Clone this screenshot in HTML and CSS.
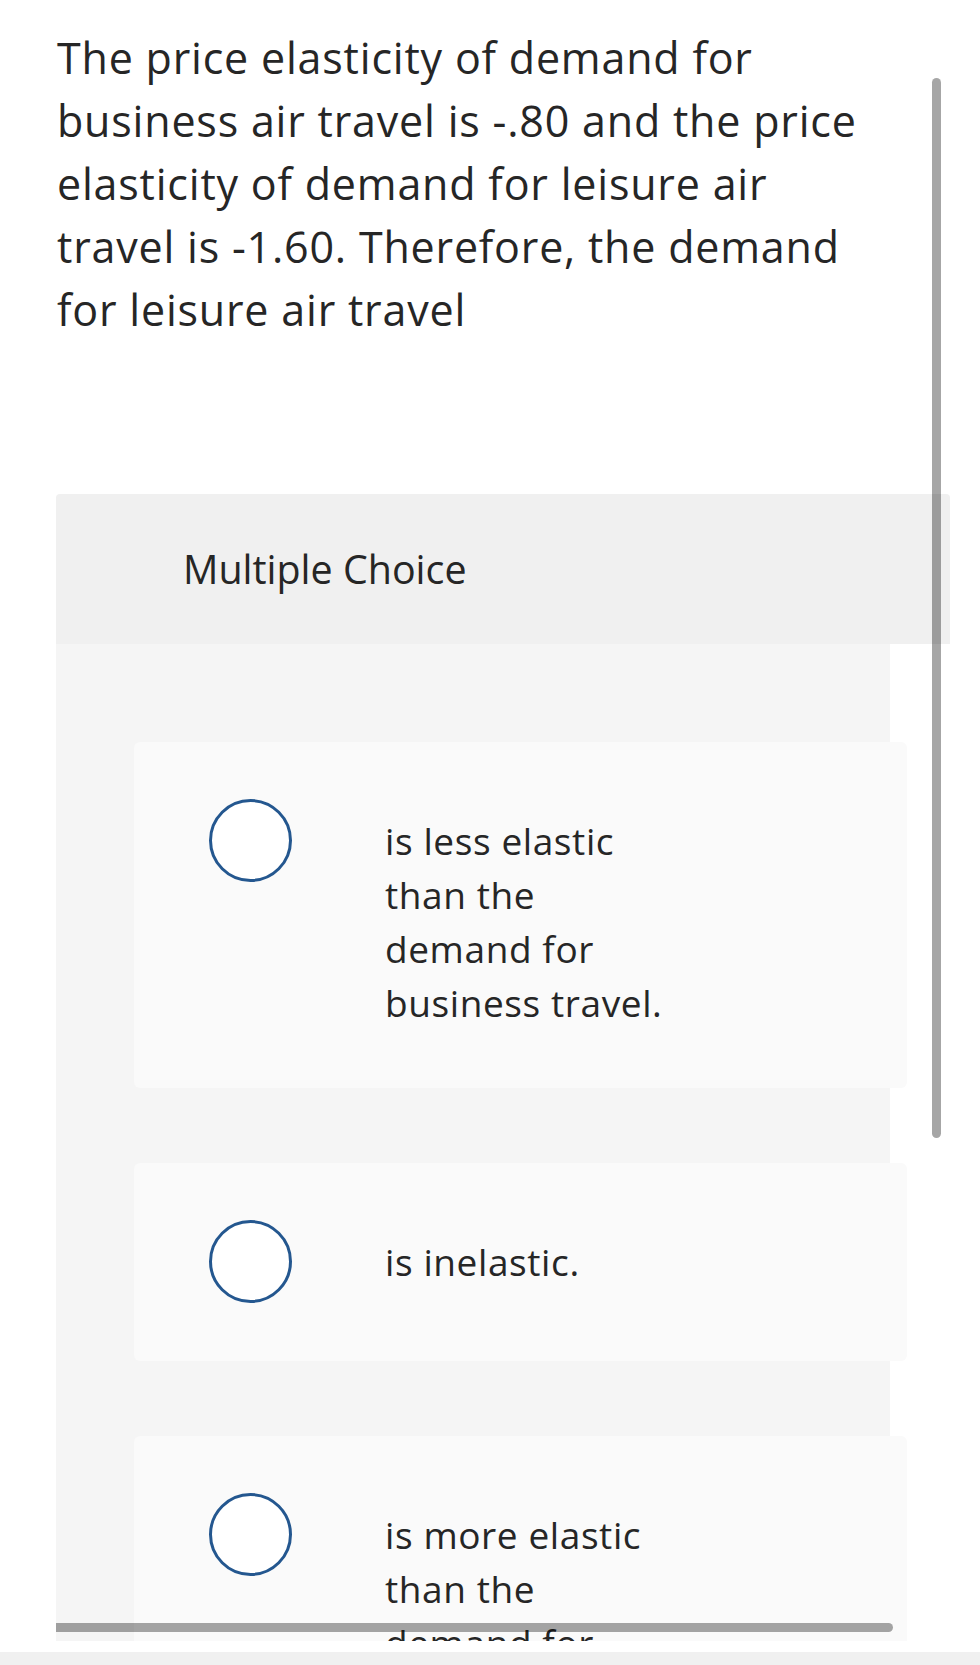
FILE: index.html
```html
<!DOCTYPE html>
<html lang="en">
<head>
<meta charset="utf-8">
<title>Multiple Choice</title>
<link rel="stylesheet" href="styles.css">
</head>
<body>
<div class="page">
  <p class="question">The price elasticity of demand for business air travel is -.80 and the price elasticity of demand for leisure air travel is -1.60. Therefore, the demand for leisure air travel</p>

  <section class="quiz">
    <div class="quiz-head">Multiple Choice</div>
    <div class="choices">
      <div class="choice">
        <span class="radio"></span>
        <span class="label">is less elastic than the demand for business travel.</span>
      </div>
      <div class="choice">
        <span class="radio"></span>
        <span class="label">is inelastic.</span>
      </div>
      <div class="choice">
        <span class="radio"></span>
        <span class="label">is more elastic than the demand for business travel.</span>
      </div>
    </div>
    <div class="hscroll"></div>
  </section>

  <div class="footer-bar"></div>
  <div class="vscroll"></div>
</div>
</body>
</html>
```
FILE: styles.css
```css
html, body {
  margin: 0;
  padding: 0;
  background: #ffffff;
}

body {
  font-family: "Open Sans", Lato, Arial, sans-serif;
  color: #262626;
}

.page {
  position: relative;
  width: 980px;
  height: 1665px;
  overflow: hidden;
}

.question {
  margin: 0;
  padding: 26px 0 0 57px;
  width: 887px;
  height: 494px;
  box-sizing: border-box;
  font-size: 43px;
  letter-spacing: 0.8px;
  line-height: 63px;
}

.quiz {
  position: relative;
  margin-left: 56px;
  width: 894px;
  height: 1147px;
  overflow: hidden;
}

.quiz-head {
  height: 150px;
  background: #f0f0f0;
  border-radius: 4px 4px 0 0;
  display: flex;
  align-items: center;
  padding-left: 127px;
  font-size: 39.4px;
}

.choices {
  width: 834px;
  min-height: 1000px;
  background: #f5f5f5;
  padding-top: 98px;
  display: flex;
  flex-direction: column;
  gap: 75px;
}

.choice {
  margin-left: 78px;
  width: 773px;
  flex-shrink: 0;
  box-sizing: border-box;
  background: #fafafa;
  border-radius: 6px;
  padding: 57px 0 58px 75px;
  display: flex;
  align-items: flex-start;
}

.radio {
  width: 83px;
  height: 83px;
  box-sizing: border-box;
  border: 3px solid #24578f;
  border-radius: 50%;
  background: #ffffff;
  flex-shrink: 0;
}

.label {
  margin-left: 93px;
  margin-top: 15px;
  width: 305px;
  font-size: 37px;
  letter-spacing: 0.6px;
  line-height: 54px;
}

.hscroll {
  position: absolute;
  left: -6px;
  bottom: 9px;
  width: 843px;
  height: 9px;
  border-radius: 5px;
  background: rgba(0, 0, 0, 0.35);
}

.footer-bar {
  margin-top: 11px;
  height: 13px;
  background: #f0f0f0;
}

.vscroll {
  position: absolute;
  left: 932px;
  top: 78px;
  width: 9px;
  height: 1060px;
  border-radius: 5px;
  background: rgba(0, 0, 0, 0.35);
}
```
